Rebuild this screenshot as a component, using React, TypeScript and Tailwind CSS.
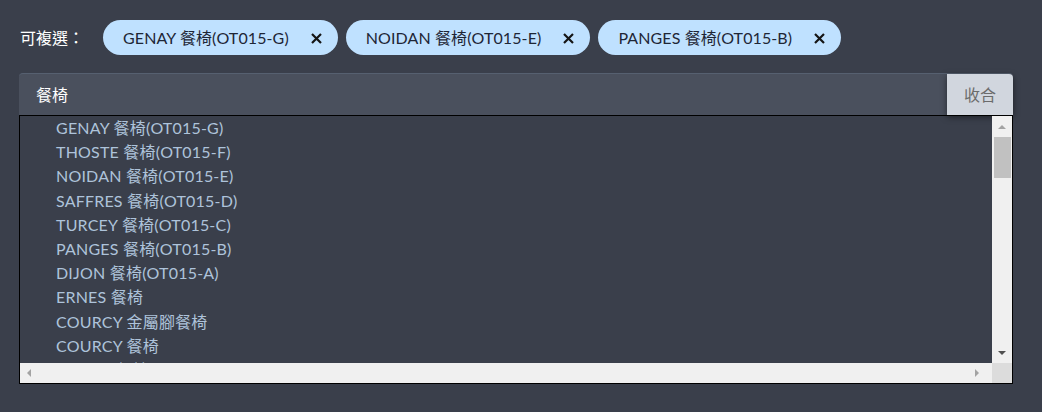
import React from "react";

const chips = ["GENAY 餐椅(OT015-G)", "NOIDAN 餐椅(OT015-E)", "PANGES 餐椅(OT015-B)"];
const items = [
  "GENAY 餐椅(OT015-G)",
  "THOSTE 餐椅(OT015-F)",
  "NOIDAN 餐椅(OT015-E)",
  "SAFFRES 餐椅(OT015-D)",
  "TURCEY 餐椅(OT015-C)",
  "PANGES 餐椅(OT015-B)",
  "DIJON 餐椅(OT015-A)",
  "ERNES 餐椅",
  "COURCY 金屬腳餐椅",
  "COURCY 餐椅",
  "LUCON 餐椅",
];

const font = { fontFamily: '"Lato", "Noto Sans CJK TC", sans-serif' };

export default function App() {
  return (
    <div className="w-[1042px] h-[412px] bg-[#3a3f4b] pl-[19px] pr-[29px] pt-[20px]" style={font}>
      <div className="flex items-center h-[35px]">
        <span className="text-white text-[16px] w-[84px] pl-px">可複選：</span>
        <div className="flex gap-[8px]">
          {chips.map((c) => (
            <div
              key={c}
              className="h-[35px] rounded-full bg-[#bfe1ff] flex items-center pl-[20px] pr-[16px] text-[16px] text-[#1e2636] tracking-[0.1px]"
            >
              <span>{c}</span>
              <svg width="11" height="11" viewBox="0 0 11 11" className="ml-[22px] mt-[2px]">
                <path d="M1 1 L10 10 M10 1 L1 10" stroke="#151515" strokeWidth="2.2" strokeLinecap="butt" />
              </svg>
            </div>
          ))}
        </div>
      </div>
      <div className="mt-[18px] h-[42px] flex rounded-t-[4px] bg-[#4a505d] border-t border-[#566070]">
        <div className="flex-1 flex items-center pl-[17px] text-white text-[16px]">餐椅</div>
        <div className="w-[66px] bg-[#d1d6de] flex items-center justify-center text-[16px] text-[#6b6b6b] rounded-tr-[4px] shadow-[0_2px_6px_rgba(0,0,0,0.5)]">
          收合
        </div>
      </div>
      <div className="w-[994px] h-[269px] border border-black flex flex-col">
        <div className="flex flex-1 min-h-0">
          <div className="flex-1 overflow-hidden pl-[36px]">
            {items.map((t, i) => (
              <div key={i} className="h-[24.2px] leading-[24.2px] text-[16px] text-[#aec3da] whitespace-nowrap tracking-[0.2px]">
                {t}
              </div>
            ))}
          </div>
          <div className="w-[20px] bg-[#f0f0f0] flex flex-col items-center">
            <div className="h-[21px] flex items-center justify-center">
              <div className="w-0 h-0 border-l-[4px] border-r-[4px] border-b-[4px] border-l-transparent border-r-transparent border-b-[#a3a3a3]" />
            </div>
            <div className="w-[17px] h-[41px] bg-[#c1c1c1] ml-[1px]" />
            <div className="flex-1" />
            <div className="h-[21px] flex items-center justify-center">
              <div className="w-0 h-0 border-l-[4px] border-r-[4px] border-t-[4px] border-l-transparent border-r-transparent border-t-[#505050]" />
            </div>
          </div>
        </div>
        <div className="h-[20px] flex">
          <div className="flex-1 bg-[#f0f0f0] flex items-center justify-between px-[7px]">
            <div className="w-0 h-0 border-t-[4px] border-b-[4px] border-r-[4px] border-t-transparent border-b-transparent border-r-[#a3a3a3]" />
            <div className="w-0 h-0 border-t-[4px] border-b-[4px] border-l-[4px] border-t-transparent border-b-transparent border-l-[#a3a3a3] mr-[6px]" />
          </div>
          <div className="w-[20px] bg-[#dcdcdc]" />
        </div>
      </div>
    </div>
  );
}
